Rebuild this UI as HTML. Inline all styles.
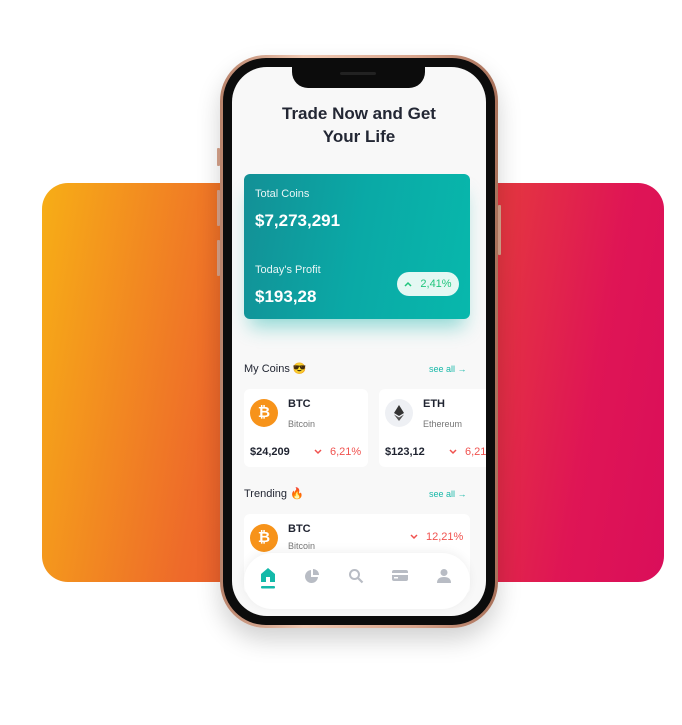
<!DOCTYPE html>
<html><head><meta charset="utf-8"><style>
*{margin:0;padding:0;box-sizing:border-box}
body{width:682px;height:725px;background:#fff;position:relative;overflow:hidden;font-family:"Liberation Sans",sans-serif}
.bg{position:absolute;left:42px;top:183px;width:622px;height:399px;border-radius:26px;background:linear-gradient(100deg,#f7ae16 0%,#ee6a2a 30%,#e64338 60%,#df1555 85%,#da0e5a 100%)}
.phone{position:absolute;left:220px;top:55px;width:278px;height:573px;border-radius:46px;background:linear-gradient(90deg,#b8826a,#f0c9b3 30%,#d8a48c 70%,#a8715a);padding:3px;box-shadow:0 12px 24px rgba(0,0,0,.18)}
.bezel{width:100%;height:100%;border-radius:43px;background:#0c0c0c;padding:9px}
.screen{position:relative;width:100%;height:100%;border-radius:35px;background:#f8f8f8;overflow:hidden}
.btn{position:absolute;background:#d8a48c;width:3px;border-radius:1px}
.notch{position:absolute;left:60px;top:0;width:133px;height:21px;background:#0c0c0c;border-radius:0 0 16px 16px;z-index:3}
.notch:after{content:"";position:absolute;left:48px;top:5px;width:36px;height:3px;border-radius:2px;background:#222}
.t{position:absolute;color:#1f2330;white-space:nowrap}
.title{left:0;width:100%;top:35px;text-align:center;font-size:17px;font-weight:bold;line-height:23px;color:#232734}
.card{position:absolute;left:12px;top:107px;width:226px;height:145px;border-radius:6px;background:linear-gradient(100deg,#139096 0%,#0aa9a6 50%,#08b8ac 100%);box-shadow:0 14px 18px -6px rgba(20,180,170,.45);color:#fff}
.card div{position:absolute;white-space:nowrap}
.pill{left:153px;top:98px;width:62px;height:24px;border-radius:12px;background:#e4f8f3;color:#20c57c;font-size:11px;line-height:24px;text-align:center}
.mini{position:absolute;background:#fff;border-radius:6px}
.coin{position:absolute;width:28px;height:28px;border-radius:50%;background:#f7931a;color:#fff;font-weight:bold;font-size:15px;text-align:center;line-height:28px}
.red{color:#f0524f}
.nav{position:absolute;left:12px;top:486px;width:226px;height:56px;border-radius:28px;background:#fff;box-shadow:0 -2px 10px rgba(0,0,0,.06)}
.chev{display:inline-block;vertical-align:middle;margin-right:8px}
</style></head><body>
<div class="bg"></div>
<div class="btn" style="left:217px;top:148px;height:18px"></div>
<div class="btn" style="left:217px;top:190px;height:36px"></div>
<div class="btn" style="left:217px;top:240px;height:36px"></div>
<div class="btn" style="left:498px;top:205px;height:50px"></div>
<div class="phone"><div class="bezel"><div class="screen">
<div class="notch"></div>
<div class="t title">Trade Now and Get<br>Your Life</div>
<div class="card">
<div style="left:11px;top:14px;font-size:11px;opacity:.9">Total Coins</div>
<div style="left:11px;top:37px;font-size:17px;font-weight:bold">$7,273,291</div>
<div style="left:11px;top:90px;font-size:11px;opacity:.9">Today's Profit</div>
<div style="left:11px;top:113px;font-size:17px;font-weight:bold">$193,28</div>
<div class="pill"><svg class="chev" width="8" height="6" viewBox="0 0 8 6"><path d="M1 5 L4 2 L7 5" fill="none" stroke="#20c57c" stroke-width="1.5"/></svg>2,41%</div>
</div>
<div class="t" style="left:12px;top:295px;font-size:11px">My Coins 😎</div>
<div class="t" style="left:197px;top:297px;font-size:9px;color:#18b8a8">see all →</div>
<div class="mini" style="left:12px;top:322px;width:124px;height:78px"></div>
<div class="mini" style="left:147px;top:322px;width:124px;height:78px"></div>
<div class="coin" style="left:18px;top:332px">₿</div>
<div class="t" style="left:56px;top:331px;font-size:11px;font-weight:bold">BTC</div>
<div class="t" style="left:56px;top:352px;font-size:9px;color:#777">Bitcoin</div>
<div class="t" style="left:18px;top:379px;font-size:11px;font-weight:bold">$24,209</div>
<div class="t red" style="left:82px;top:379px;font-size:11px"><svg class="chev" width="8" height="6" viewBox="0 0 8 6"><path d="M1 1 L4 4 L7 1" fill="none" stroke="#f0524f" stroke-width="1.5"/></svg>6,21%</div>
<div style="position:absolute;left:153px;top:332px;width:28px;height:28px;border-radius:50%;background:#eef0f4"><svg width="28" height="28" viewBox="0 0 28 28"><path d="M14 6 L19 14 L14 17 L9 14Z" fill="#333"/><path d="M14 18.5 L19 15.5 L14 22 L9 15.5Z" fill="#555"/></svg></div>
<div class="t" style="left:191px;top:331px;font-size:11px;font-weight:bold">ETH</div>
<div class="t" style="left:191px;top:352px;font-size:9px;color:#777">Ethereum</div>
<div class="t" style="left:153px;top:379px;font-size:11px;font-weight:bold">$123,12</div>
<div class="t red" style="left:217px;top:379px;font-size:11px"><svg class="chev" width="8" height="6" viewBox="0 0 8 6"><path d="M1 1 L4 4 L7 1" fill="none" stroke="#f0524f" stroke-width="1.5"/></svg>6,21%</div>
<div class="t" style="left:12px;top:420px;font-size:11px">Trending 🔥</div>
<div class="t" style="left:197px;top:422px;font-size:9px;color:#18b8a8">see all →</div>
<div class="mini" style="left:12px;top:447px;width:226px;height:80px"></div>
<div class="coin" style="left:18px;top:457px">₿</div>
<div class="t" style="left:56px;top:456px;font-size:11px;font-weight:bold">BTC</div>
<div class="t" style="left:56px;top:474px;font-size:9px;color:#777">Bitcoin</div>
<div class="t red" style="left:178px;top:464px;font-size:11px"><svg class="chev" width="8" height="6" viewBox="0 0 8 6"><path d="M1 1 L4 4 L7 1" fill="none" stroke="#f0524f" stroke-width="1.5"/></svg>12,21%</div>
<div class="t" style="left:56px;top:531px;font-size:9px;color:#777">Revain</div>
<div class="nav">
<svg style="position:absolute;left:16px;top:14px" width="16" height="22" viewBox="0 0 16 22"><path d="M8 1 L15 7 V15 H1 V7Z" fill="#13b9a9"/><rect x="6" y="10" width="4" height="5" fill="#fff"/><rect x="1" y="19" width="14" height="2.5" rx="1" fill="#13b9a9"/></svg>
<svg style="position:absolute;left:60px;top:15px" width="16" height="16" viewBox="0 0 16 16"><path d="M7 2 A6.5 6.5 0 1 0 14 9 H7Z" fill="#b8bcc4"/><path d="M9 1 A6 6 0 0 1 15 7 H9Z" fill="#b8bcc4"/></svg>
<svg style="position:absolute;left:104px;top:15px" width="16" height="16" viewBox="0 0 16 16"><circle cx="6.5" cy="6.5" r="4.5" fill="none" stroke="#b8bcc4" stroke-width="2"/><path d="M10 10 L14.5 14.5" stroke="#b8bcc4" stroke-width="2.2"/></svg>
<svg style="position:absolute;left:148px;top:16px" width="16" height="13" viewBox="0 0 16 13"><rect x="0" y="1" width="16" height="11" rx="2" fill="#b8bcc4"/><rect x="0" y="4" width="16" height="2" fill="#fff"/><rect x="2" y="8" width="4" height="1.5" fill="#fff"/></svg>
<svg style="position:absolute;left:193px;top:15px" width="14" height="16" viewBox="0 0 14 16"><circle cx="7" cy="4.5" r="3.5" fill="#b8bcc4"/><path d="M0 15 Q0 9 7 9 Q14 9 14 15Z" fill="#b8bcc4"/></svg>
</div>
</div></div></div>
</body></html>
